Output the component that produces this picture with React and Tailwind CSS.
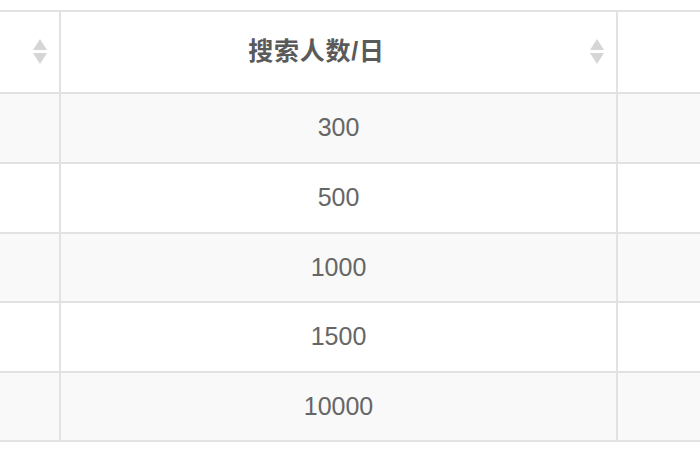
const rows = [
  { value: "300", h: "h-[70px]" },
  { value: "500", h: "h-[70px]" },
  { value: "1000", h: "h-[69px]" },
  { value: "1500", h: "h-[70px]" },
  { value: "10000", h: "h-[69px]" },
];

function SortIcon() {
  return (
    <svg width="16" height="28" viewBox="0 0 16 28" className="shrink-0">
      <path d="M8 1 L15 12 L1 12 Z" fill="#d6d6d6" />
      <path d="M1 15 L15 15 L8 26 Z" fill="#d6d6d6" />
    </svg>
  );
}

export default function App() {
  return (
    <div className="w-[700px] h-[470px] bg-white overflow-hidden pt-[10px]">
      <div
        className="grid grid-cols-[61px_557px_1fr] border-t-2 border-[#e2e2e2]"
        style={{ fontFamily: '"Liberation Sans", "Noto Sans CJK SC", sans-serif' }}
      >
        <div className="h-[82px] border-r-2 border-b-2 border-[#e2e2e2] flex items-center justify-end pr-[11px]">
          <SortIcon />
        </div>
        <div className="h-[82px] border-r-2 border-b-2 border-[#e2e2e2] relative flex items-center justify-center pr-[44px]">
          <span className="text-[25px] font-bold text-[#5a5a5a] tracking-[0.8px]">搜索人数/日</span>
          <div className="absolute right-[11px] top-1/2 -translate-y-1/2 flex">
            <SortIcon />
          </div>
        </div>
        <div className="h-[82px] border-b-2 border-[#e2e2e2]" />

        {rows.map((r, i) => {
          const bg = i % 2 === 0 ? "bg-[#f9f9f9]" : "bg-white";
          return (
            <div key={i} className="contents">
              <div className={`${r.h} border-r-2 border-b-2 border-[#e2e2e2] ${bg}`} />
              <div className={`${r.h} border-r-2 border-b-2 border-[#e2e2e2] flex items-center justify-center text-[25px] text-[#666666] ${bg}`}>
                {r.value}
              </div>
              <div className={`${r.h} border-b-2 border-[#e2e2e2] ${bg}`} />
            </div>
          );
        })}
      </div>
    </div>
  );
}
